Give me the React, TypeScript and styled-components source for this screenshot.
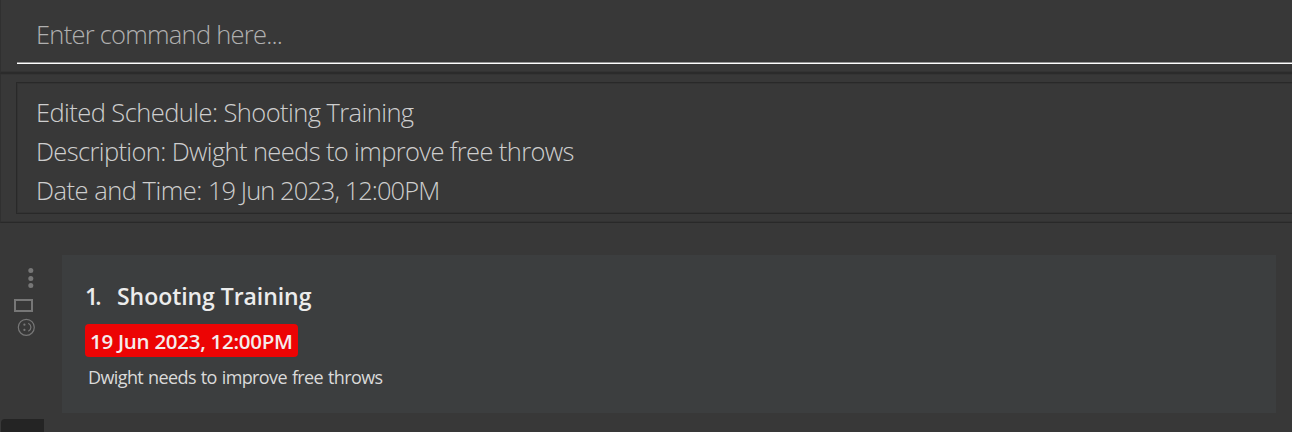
import React from "react";
import styled, { createGlobalStyle } from "styled-components";

const GlobalStyle = createGlobalStyle`
  * { box-sizing: border-box; }
  body {
    margin: 0;
    background: #383838;
    overflow: hidden;
    font-family: "Open Sans", "Noto Sans", sans-serif;
  }
`;

const Window = styled.div`
  display: flex;
  flex-direction: column;
  width: 1292px;
  height: 432px;
  background: #383838;
  overflow: hidden;
`;

const CommandPane = styled.header`
  height: 74px;
  padding-left: 16px;
  border-left: 1px solid #303030;
  border-bottom: 2px solid #2b2b2b;
  box-shadow: inset 0 -1px #333, 0 1px #343434;
`;

const CommandField = styled.div`
  height: 64px;
  padding: 15px 0 0 19px;
  border-bottom: 1px solid #fff;
  box-shadow: inset 0 -1px #969696;
`;

const Line = styled.div<{ $spacing: number; $color?: string }>`
  height: 39px;
  line-height: 39px;
  font-size: 25.5px;
  font-weight: 300;
  letter-spacing: ${(p) => p.$spacing}px;
  color: ${(p) => p.$color ?? "#cecece"};
  white-space: pre;
`;

const Timestamp = styled.span`
  letter-spacing: -0.95px;
`;

const ResultPane = styled.section`
  height: 149px;
  padding: 8px 0 0 15px;
  border-left: 1px solid #303030;
  border-bottom: 1px solid #292929;
  box-shadow: inset 0 -1px #333;
`;

const ResultBox = styled.div`
  height: 132px;
  padding: 10px 0 0 19px;
  border: 1px solid #292929;
  border-right: 0;
  box-shadow: inset 1px 1px #333, inset 0 -1px #333;
`;

const ListPane = styled.main`
  display: flex;
  flex: 1;
  padding-top: 32px;
`;

const Rail = styled.aside`
  width: 62px;
  height: 177px;
  display: flex;
  flex-direction: column;
  justify-content: space-between;
`;

const RailIcons = styled.svg`
  display: block;
  width: 40px;
  height: 90px;
`;

const CornerTab = styled.div`
  width: 43px;
  height: 13px;
  margin-left: 1px;
  border-top-left-radius: 4px;
  background: #242424;
`;

const Card = styled.article`
  width: 1214px;
  height: 158px;
  padding: 23px 0 0 23px;
  background: #3c3e3f;
`;

const Title = styled.h2`
  display: flex;
  margin: 0;
  height: 36px;
  line-height: 36px;
  font-size: 23px;
  font-weight: 600;
  color: #ececec;
`;

const Index = styled.span`
  width: 32px;
  letter-spacing: -3px;
`;

const Name = styled.span`
  letter-spacing: -0.05px;
`;

const DateBadge = styled.div`
  width: 213px;
  height: 33px;
  margin-top: 10px;
  padding-left: 5px;
  border-radius: 4px;
  background: #ec0404;
  color: #f4ecec;
  font-size: 20.5px;
  font-weight: 600;
  line-height: 35px;
  letter-spacing: -0.27px;
  white-space: nowrap;
`;

const Description = styled.p`
  margin: 6px 0 0 3px;
  line-height: 28px;
  font-size: 18px;
  letter-spacing: -0.6px;
  word-spacing: 0.8px;
  color: #dadada;
`;

export default function App() {
  return (
    <>
      <GlobalStyle />
      <Window>
        <CommandPane>
          <CommandField>
            <Line $spacing={-0.75} $color="#b0b0b0">Enter command here...</Line>
          </CommandField>
        </CommandPane>
        <ResultPane>
          <ResultBox>
            <Line $spacing={-0.57}>Edited Schedule: Shooting Training</Line>
            <Line $spacing={-0.63}>Description: Dwight needs to improve free throws</Line>
            <Line $spacing={-0.5}>
              Date and Time: <Timestamp>19 Jun 2023, 12:00PM</Timestamp>
            </Line>
          </ResultBox>
        </ResultPane>
        <ListPane>
          <Rail>
            <RailIcons viewBox="0 255 40 90" fill="none" stroke="#777">
              <g fill="#777" stroke="none">
                <circle cx="30.8" cy="270.6" r="2.5" />
                <circle cx="30.8" cy="278.5" r="2.5" />
                <circle cx="30.8" cy="285.5" r="2.5" />
              </g>
              <rect x="15" y="300" width="17" height="11" strokeWidth="2" />
              <circle cx="26.3" cy="327.3" r="8" strokeWidth="1.2" />
              <path d="M28.3 323.3C31.8 325.2 31.8 329.4 28.3 331.3" strokeWidth="1.2" />
              <g fill="#777" stroke="none">
                <circle cx="24.4" cy="324.7" r="1.1" />
                <circle cx="24.4" cy="329.9" r="1.1" />
              </g>
            </RailIcons>
            <CornerTab />
          </Rail>
          <Card>
            <Title>
              <Index>1.</Index>
              <Name>Shooting Training</Name>
            </Title>
            <DateBadge>19 Jun 2023, 12:00PM</DateBadge>
            <Description>Dwight needs to improve free throws</Description>
          </Card>
        </ListPane>
      </Window>
    </>
  );
}
